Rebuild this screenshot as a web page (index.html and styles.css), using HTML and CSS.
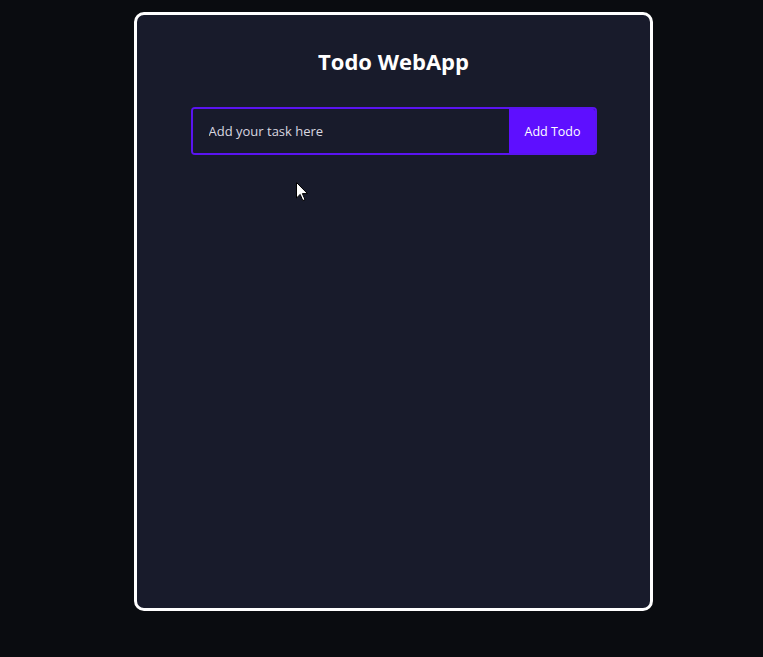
FILE: index.html
```html
<!DOCTYPE html>
<html>
<head>
<meta charset="utf-8">
<link rel="stylesheet" href="styles.css">
</head>
<body>
<div class="page">
  <div class="card">
    <h1 class="title">Todo WebApp</h1>
    <form class="todo-form">
      <input class="todo-input" type="text" placeholder="Add your task here">
      <button class="todo-btn" type="button">Add Todo</button>
    </form>
  </div>
</div>
<svg class="cursor" width="13" height="20" viewBox="0 0 13 20"><path d="M0.5 0.5 L0.5 16 L4.2 12.4 L6.8 18.6 L9 17.6 L6.4 11.6 L11.5 11.6 Z" fill="#fff" stroke="#000" stroke-width="1"/></svg>
</body>
</html>
```
FILE: styles.css
```css
html, body {
  margin: 0;
  padding: 0;
  background: #0a0c10;
  height: 100%;
}
body {
  font-family: "Open Sans", "DejaVu Sans", sans-serif;
}
.page {
  padding: 12px 0 0 134px;
}
.card {
  box-sizing: border-box;
  width: 519px;
  height: 599px;
  border: 3px solid #fff;
  border-radius: 10px;
  background: #181b2b;
  display: flex;
  flex-direction: column;
  align-items: center;
}
.title {
  margin: 31px 0 0;
  color: #fff;
  font-size: 22px;
  font-weight: bold;
  line-height: 30px;
}
.todo-form {
  margin-top: 31px;
  width: 406px;
  height: 48px;
  display: flex;
  box-sizing: border-box;
  border: 2px solid #5a14f0;
  border-radius: 4px;
  overflow: hidden;
}
.todo-input {
  flex: 1;
  min-width: 0;
  background: #181b2b;
  border: none;
  outline: none;
  color: #fff;
  padding: 0 0 0 16px;
  font-family: inherit;
  font-size: 13px;
}
.todo-input::placeholder {
  color: #d8d8e0;
}
.todo-btn {
  width: 86px;
  background: #5e0fff;
  border: none;
  color: #fff;
  font-family: inherit;
  font-size: 12.5px;
  padding: 0 0 0 2px;
  white-space: nowrap;
}
.cursor {
  position: absolute;
  left: 296px;
  top: 182px;
}
```
